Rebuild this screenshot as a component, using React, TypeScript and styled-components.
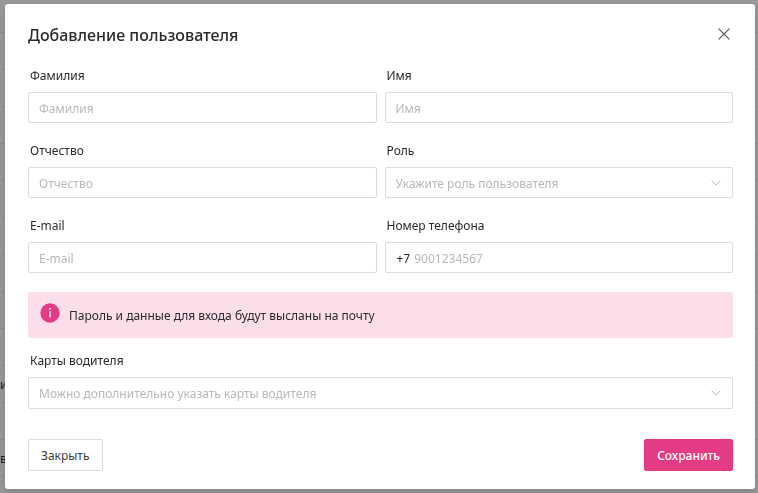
import React from 'react';
import styled, { createGlobalStyle, css } from 'styled-components';

const GlobalStyle = createGlobalStyle`
  *, *::before, *::after { box-sizing: border-box; }
  body {
    margin: 0;
    background: #fff;
    color: #2a2a2c;
    font-family: 'Noto Sans', 'Open Sans', sans-serif;
    font-size: 12px;
    line-height: 20px;
  }
  button, input, select { font: inherit; color: inherit; }
`;

const Page = styled.div`
  height: 100vh;
  overflow: hidden;
`;

const ListRow = styled.div`
  display: flex;
  align-items: center;
  height: 37px;
  padding-top: 2px;
  border-bottom: 1px solid #ebebeb;
  color: #1d3550;

  &:first-child { height: 33px; }
`;

const Overlay = styled.div`
  position: fixed;
  inset: 0;
  padding: 4px 3px 4px 5px;
  background: rgba(0, 0, 0, 0.4);
`;

const Dialog = styled.form`
  display: flex;
  flex-direction: column;
  padding: 20px 22px 18px 23px;
  border-radius: 3px;
  background: #fff;
  box-shadow: 0 4px 12px rgba(0, 0, 0, 0.15);
`;

const Header = styled.header`
  display: flex;
  align-items: center;
  justify-content: space-between;
  height: 22px;
  margin-bottom: 20px;
`;

const Title = styled.h1`
  margin: 0;
  font-size: 16px;
  font-weight: 500;
  line-height: 22px;
`;

const CloseButton = styled.button`
  display: flex;
  align-items: center;
  justify-content: center;
  width: 18px;
  height: 20px;
  padding: 0 0 2px;
  border: 0;
  background: none;
  color: #555;
`;

const Fields = styled.div`
  display: grid;
  grid-template-columns: 1fr 1fr;
  gap: 18px 8px;
`;

const Field = styled.div`
  display: flex;
  flex-direction: column;
  gap: 6px;
`;

const Label = styled.label`
  padding-left: 2px;
`;

const frame = css`
  width: 100%;
  height: 31px;
  border: 1px solid #dadada;
  border-radius: 2px;
  background: #fff;
`;

const TextInput = styled.input`
  ${frame}
  padding: 2px 10px 0;
  outline: none;

  &::placeholder { color: #b8b8b8; opacity: 1; }
`;

const PhoneBox = styled.div`
  ${frame}
  display: flex;
  align-items: center;
  gap: 4px;
  padding: 2px 11px 0;
`;

const PhoneInput = styled.input`
  flex: 1;
  min-width: 0;
  padding: 0;
  border: 0;
  outline: none;
  background: none;

  &::placeholder { color: #b8b8b8; opacity: 1; }
`;

const SelectBox = styled.div<{ $tall?: boolean }>`
  ${frame}
  height: ${({ $tall }) => ($tall ? 32 : 31)}px;
  display: grid;
  grid-template-columns: 1fr 32px;
  align-items: center;
  color: #b8b8b8;

  select {
    grid-area: 1 / 1 / 2 / 3;
    width: 100%;
    height: 100%;
    padding: 2px 10px 0;
    border: 0;
    outline: none;
    background: none;
    appearance: none;
  }

  svg {
    grid-area: 1 / 2;
    justify-self: center;
    pointer-events: none;
  }
`;

const Notice = styled.p`
  display: flex;
  align-items: center;
  gap: 9px;
  height: 46px;
  margin: 19px 0 13px;
  padding: 2px 12px 0;
  border-radius: 3px;
  background: #fbdeea;

  svg { margin-bottom: 6px; }
`;

const Actions = styled.footer`
  display: flex;
  justify-content: space-between;
  margin-top: 30px;
`;

const Button = styled.button<{ $primary?: boolean }>`
  height: 32px;
  padding: 2px 12px 0;
  border: 1px solid ${({ $primary }) => ($primary ? '#e43c84' : '#dadada')};
  border-radius: 2px;
  background: ${({ $primary }) => ($primary ? '#e43c84' : '#fff')};
  color: ${({ $primary }) => ($primary ? '#fff' : '#3c3c3e')};
  font-weight: ${({ $primary }) => ($primary ? 500 : 400)};
`;

const Chevron = () => (
  <svg width="10" height="10" viewBox="0 0 10 10" fill="none" stroke="currentColor" aria-hidden="true">
    <path d="M.6 2.6 5 7.1 9.4 2.6" />
  </svg>
);

const InfoIcon = () => (
  <svg width="20" height="20" viewBox="0 0 20 20" aria-hidden="true">
    <circle cx="10" cy="10" r="9.7" fill="#e43c84" />
    <circle cx="10" cy="5.7" r="1" fill="#fff" />
    <path d="M10 8.2v6.4" stroke="#fff" strokeWidth="1.4" />
  </svg>
);

type TextFieldProps = { id: string; label: string; type?: string };

const TextField = ({ id, label, type = 'text' }: TextFieldProps) => (
  <Field>
    <Label htmlFor={id}>{label}</Label>
    <TextInput id={id} type={type} placeholder={label} />
  </Field>
);

type SelectFieldProps = { id: string; label: string; hint: string; tall?: boolean };

const SelectField = ({ id, label, hint, tall }: SelectFieldProps) => (
  <Field>
    <Label htmlFor={id}>{label}</Label>
    <SelectBox $tall={tall}>
      <select id={id} defaultValue="">
        <option value="">{hint}</option>
      </select>
      <Chevron />
    </SelectBox>
  </Field>
);

const rows = ['', '', '', '', '', '', '', '', '', '', 'и', '', 'в'];

export default function App() {
  return (
    <Page>
      <GlobalStyle />
      <div aria-hidden="true">
        {rows.map((text, i) => (
          <ListRow key={i}>{text}</ListRow>
        ))}
      </div>
      <Overlay>
        <Dialog role="dialog" aria-modal="true" aria-labelledby="title" onSubmit={(e) => e.preventDefault()}>
          <Header>
            <Title id="title">Добавление пользователя</Title>
            <CloseButton type="button" aria-label="Закрыть окно">
              <svg width="12" height="12" viewBox="0 0 12 12" stroke="currentColor" strokeWidth="1.2" aria-hidden="true">
                <path d="m.6.6 10.8 10.8M11.4.6.6 11.4" />
              </svg>
            </CloseButton>
          </Header>
          <Fields>
            <TextField id="surname" label="Фамилия" />
            <TextField id="name" label="Имя" />
            <TextField id="patronymic" label="Отчество" />
            <SelectField id="role" label="Роль" hint="Укажите роль пользователя" />
            <TextField id="email" label="E-mail" type="email" />
            <Field>
              <Label htmlFor="phone">Номер телефона</Label>
              <PhoneBox>
                <span>+7</span>
                <PhoneInput id="phone" type="tel" placeholder="9001234567" />
              </PhoneBox>
            </Field>
          </Fields>
          <Notice>
            <InfoIcon />
            <span>Пароль и данные для входа будут высланы на почту</span>
          </Notice>
          <SelectField id="cards" label="Карты водителя" hint="Можно дополнительно указать карты водителя" tall />
          <Actions>
            <Button type="button">Закрыть</Button>
            <Button type="submit" $primary>Сохранить</Button>
          </Actions>
        </Dialog>
      </Overlay>
    </Page>
  );
}
